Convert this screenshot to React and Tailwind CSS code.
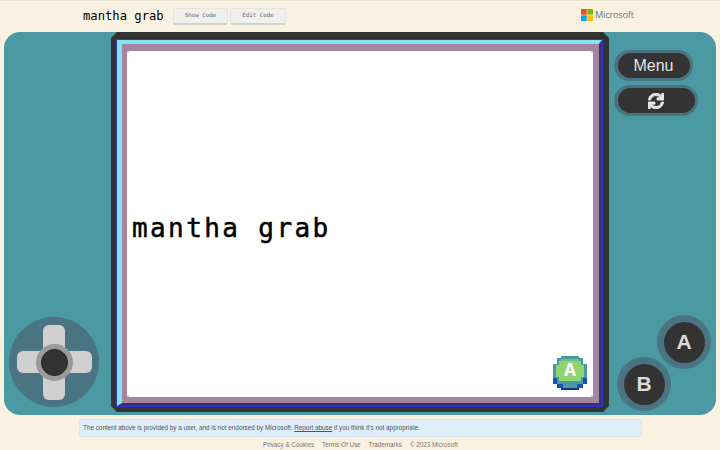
import React from 'react';
import { FaSync } from 'react-icons/fa';

function MsLogo() {
  return (
    <svg width="12" height="12" viewBox="0 0 12 12" className="shrink-0">
      <rect x="0" y="0" width="5.7" height="5.7" fill="#f25022" />
      <rect x="6.3" y="0" width="5.7" height="5.7" fill="#7fba00" />
      <rect x="0" y="6.3" width="5.7" height="5.7" fill="#00a4ef" />
      <rect x="6.3" y="6.3" width="5.7" height="5.7" fill="#ffb900" />
    </svg>
  );
}

function CodeButton({ label, width }) {
  return (
    <button
      type="button"
      className={`${width} h-[17px] rounded-[2px] bg-[#f0f0ee] border border-[#e6e4de] border-b-2 border-b-[#d0d0cc] text-[#666] text-[5.8px] font-['DejaVu_Sans_Mono',monospace] leading-none`}
    >
      {label}
    </button>
  );
}

function Header() {
  return (
    <div className="h-8 flex items-center border-t border-[#e8e2d2] pl-[83px]">
      <div className="w-[90px] text-[12.2px] text-black font-['DejaVu_Sans_Mono',monospace]">mantha grab</div>
      <div className="flex gap-[2px]">
        <CodeButton label="Show Code" width="w-[55px]" />
        <CodeButton label="Edit Code" width="w-[56px]" />
      </div>
      <div className="ml-[295px] flex items-center gap-[2px] text-[9.2px] text-[#737373] font-['Open_Sans',sans-serif] -mt-[3px]">
        <MsLogo />
        <span className="tracking-[-0.2px]">Microsoft</span>
      </div>
    </div>
  );
}

function DPad() {
  return (
    <div className="relative w-[90px] h-[90px] rounded-full bg-[#4a7482] flex items-center justify-center">
      <div className="absolute w-[22px] h-[75px] rounded-[6px] bg-[#d0d0d0]" />
      <div className="absolute w-[75px] h-[22px] rounded-[6px] bg-[#d0d0d0]" />
      <div className="absolute w-[37px] h-[37px] rounded-full bg-[#9a9a9a] flex items-center justify-center">
        <div className="w-[27px] h-[27px] rounded-full bg-[#333] border border-[#222]" />
      </div>
    </div>
  );
}

function PillButton({ width, children, className }) {
  return (
    <div className={`${width} ${className} h-[31px] rounded-full bg-[#4a7482] flex items-center justify-center`}>
      <div className="w-[calc(100%-7px)] h-[25px] rounded-full bg-[#333] flex items-center justify-center text-[#e4e4e4] text-[16px] font-['Liberation_Sans',sans-serif]">
        {children}
      </div>
    </div>
  );
}

function RoundButton({ label, className }) {
  return (
    <div className={`${className} w-[54px] h-[54px] rounded-full bg-[#4a7482] flex items-center justify-center`}>
      <div className="w-[41px] h-[41px] rounded-full bg-[#333] flex items-center justify-center text-[#dcdcdc] text-[21px] font-bold font-['Liberation_Sans',sans-serif]">
        {label}
      </div>
    </div>
  );
}

function ASprite() {
  return (
    <div className="absolute right-[6px] bottom-[7px] w-[34px] h-[34px]">
      <svg width="34" height="34" viewBox="0 0 34 34" shapeRendering="crispEdges" className="absolute inset-0">
        <rect x="8" y="0" width="18" height="34" fill="#4a9aa0" />
        <rect x="4" y="2" width="26" height="30" fill="#4a9aa0" />
        <rect x="0" y="8" width="34" height="18" fill="#4a9aa0" />
        <rect x="8" y="3" width="18" height="2" fill="#6cc08a" />
        <rect x="6" y="5" width="22" height="20" fill="#8fd46f" />
        <rect x="3" y="9" width="28" height="12" fill="#8fd46f" />
        <rect x="8" y="32" width="18" height="2" fill="#0f2f9c" />
        <rect x="4" y="28" width="6" height="4" fill="#1a4fb8" />
        <rect x="24" y="28" width="6" height="4" fill="#1a4fb8" />
        <rect x="0" y="22" width="4" height="6" fill="#1a4fb8" />
        <rect x="30" y="22" width="4" height="6" fill="#1a4fb8" />
      </svg>
      <div className="absolute inset-0 flex items-center justify-center pb-[4px] text-white text-[20px] font-bold leading-none font-['Liberation_Mono',monospace]">A</div>
    </div>
  );
}

function Corner({ className }) {
  return <div className={`absolute w-[2px] h-[2px] bg-[#e6d2cc] ${className}`} />;
}

function Screen() {
  return (
    <div className="w-[498px] h-[380px] bg-[#333] pt-[7px] pl-[5px] pr-[6px] pb-[5px] [clip-path:polygon(6px_0,calc(100%-6px)_0,100%_6px,100%_calc(100%-6px),calc(100%-6px)_100%,6px_100%,0_calc(100%-6px),0_6px)]">
      <div className="h-full border border-[#2a3ad0]">
        <div className="h-full border-t-[4px] border-l-[5px] border-r-[3px] border-b-[3px] border-t-[#86e4f2] border-l-[#86e4f2] border-r-[#3f2f6b] border-b-[#3f2f6b]">
          <div className="relative h-full border-t-[7px] border-l-[5px] border-r-[6px] border-b-[6px] border-[#a285a0] bg-white flex items-center">
            <Corner className="top-0 left-0" />
            <Corner className="top-0 right-0" />
            <Corner className="bottom-0 left-0" />
            <Corner className="bottom-0 right-0" />
            <div className="pl-[5px] mt-[7px] text-[26px] tracking-[2.4px] text-black leading-none [-webkit-text-stroke:0.5px_black] font-['DejaVu_Sans_Mono',monospace]">mantha grab</div>
            <ASprite />
          </div>
        </div>
      </div>
    </div>
  );
}

function Console() {
  return (
    <div className="mx-1 h-[383px] rounded-[16px] bg-[#4b9aa3] flex">
      <div className="w-[107px] flex flex-col justify-end pl-[5px] pb-[8px]">
        <DPad />
      </div>
      <Screen />
      <div className="flex-1 flex flex-col pl-[5px] pt-[18px] pb-[4px]">
        <PillButton width="w-[79px]"><span className="mt-[1px]">Menu</span></PillButton>
        <PillButton width="w-[84px]" className="mt-[4px]"><FaSync size={16} stroke="currentColor" strokeWidth={30} /></PillButton>
        <div className="mt-auto flex flex-col">
          <RoundButton label="A" className="self-end mr-[5px]" />
          <RoundButton label="B" className="ml-[3px] -mt-[12px]" />
        </div>
      </div>
    </div>
  );
}

function Footer() {
  return (
    <div className="font-['Liberation_Sans',sans-serif]">
      <div className="mt-[4px] ml-[79px] w-[563px] h-[18px] rounded-[2px] bg-[#e0eefb] border border-[#d6e6f2] flex items-center pl-[3px] text-[6.35px] text-[#555]">
        <span>The content above is provided by a user, and is not endorsed by Microsoft. <span className="underline">Report abuse</span> if you think it's not appropriate.</span>
      </div>
      <div className="mt-[3px] pl-[263px] flex gap-[8px] text-[6.3px] text-[#777] leading-[9px]">
        <span>Privacy &amp; Cookies</span>
        <span>Terms Of Use</span>
        <span>Trademarks</span>
        <span>© 2023 Microsoft</span>
      </div>
    </div>
  );
}

export default function App() {
  return (
    <div className="w-[720px] h-[450px] overflow-hidden bg-[#faf2e0]">
      <Header />
      <Console />
      <Footer />
    </div>
  );
}
